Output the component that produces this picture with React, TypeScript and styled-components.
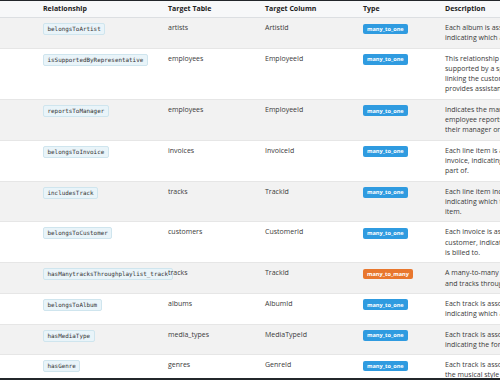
import * as React from 'react';
import styled, { createGlobalStyle } from 'styled-components';

const GlobalStyle = createGlobalStyle`
  * {
    box-sizing: border-box;
  }
  html, body {
    margin: 0;
    padding: 0;
    background: #23272b;
    overflow: hidden;
  }
`;

const StyledFrame = styled.div`
  margin-top: 1px;
  width: 500px;
  height: 377px;
  overflow: hidden;
  background: #ffffff;
  font-family: 'Open Sans', 'Segoe UI', sans-serif;
  font-size: 7px;
  color: #3a3a3a;
`;

const StyledTable = styled.table`
  border-collapse: collapse;
  table-layout: fixed;
  width: 700px;
`;

const StyledHeadCell = styled.th`
  text-align: left;
  font-weight: 700;
  color: #222222;
  line-height: 10px;
  padding: 3px 5px;
  background: #f7f8f9;
  border-bottom: 1px solid #dcdfe2;
`;

const StyledRow = styled.tr<{ $striped: boolean }>`
  background: ${(p) => (p.$striped ? '#f2f2f2' : '#ffffff')};
  border-bottom: 1px solid #e6e6e6;
`;

const StyledCell = styled.td`
  vertical-align: top;
  padding: 5px 5px 4px;
  line-height: 10.3px;
`;

const StyledCode = styled.code`
  display: inline-block;
  white-space: nowrap;
  font-family: 'DejaVu Sans Mono', 'Liberation Mono', monospace;
  font-size: 5.9px;
  line-height: 8px;
  padding: 1px 3.5px;
  color: #333333;
  background: #e9f4f9;
  border: 1px solid #cfe5ee;
  border-radius: 2px;
`;

const StyledPill = styled.span<{ $kind: string }>`
  display: inline-block;
  font-size: 5.6px;
  font-weight: 700;
  line-height: 8px;
  padding: 1.3px 4px;
  margin-top: 0.5px;
  color: #ffffff;
  border-radius: 2px;
  background: ${(p) => (p.$kind === 'many_to_many' ? '#e8772e' : '#2f9be0')};
`;

const StyledLine = styled.span`
  display: block;
  white-space: nowrap;
`;

type Relation = {
  name: string;
  table: string;
  column: string;
  type: string;
  description: string[];
};

const relations: Relation[] = [
  {
    name: 'belongsToArtist',
    table: 'artists',
    column: 'ArtistId',
    type: 'many_to_one',
    description: ['Each album is associated with a single artist,', 'indicating which artist created the album.'],
  },
  {
    name: 'isSupportedByRepresentative',
    table: 'employees',
    column: 'EmployeeId',
    type: 'many_to_one',
    description: [
      'This relationship shows that each customer is',
      'supported by a specific sales support agent,',
      'linking the customer to the employee who',
      'provides assistance.',
    ],
  },
  {
    name: 'reportsToManager',
    table: 'employees',
    column: 'EmployeeId',
    type: 'many_to_one',
    description: [
      'Indicates the management hierarchy, where each',
      'employee reports to another employee who is',
      'their manager or supervisor.',
    ],
  },
  {
    name: 'belongsToInvoice',
    table: 'invoices',
    column: 'InvoiceId',
    type: 'many_to_one',
    description: ['Each line item is associated with a specific', 'invoice, indicating which invoice it is', 'part of.'],
  },
  {
    name: 'includesTrack',
    table: 'tracks',
    column: 'TrackId',
    type: 'many_to_one',
    description: ['Each line item includes a specific track,', 'indicating which track was purchased in that', 'item.'],
  },
  {
    name: 'belongsToCustomer',
    table: 'customers',
    column: 'CustomerId',
    type: 'many_to_one',
    description: ['Each invoice is associated with a specific', 'customer, indicating which customer the invoice', 'is billed to.'],
  },
  {
    name: 'hasManytracksThroughplaylist_track',
    table: 'tracks',
    column: 'TrackId',
    type: 'many_to_many',
    description: ['A many-to-many relationship between playlists', 'and tracks through the playlist_track table.'],
  },
  {
    name: 'belongsToAlbum',
    table: 'albums',
    column: 'AlbumId',
    type: 'many_to_one',
    description: ['Each track is associated with a specific album,', 'indicating which album the track belongs to.'],
  },
  {
    name: 'hasMediaType',
    table: 'media_types',
    column: 'MediaTypeId',
    type: 'many_to_one',
    description: ['Each track is associated with a media type,', 'indicating the format of the track.'],
  },
  {
    name: 'hasGenre',
    table: 'genres',
    column: 'GenreId',
    type: 'many_to_one',
    description: ['Each track is associated with a genre, defining', 'the musical style of the track.'],
  },
];

export const App = (): React.ReactElement => (
  <>
    <GlobalStyle />
    <StyledFrame>
      <StyledTable>
        <colgroup>
          <col style={{ width: 38 }} />
          <col style={{ width: 125 }} />
          <col style={{ width: 97 }} />
          <col style={{ width: 98 }} />
          <col style={{ width: 82 }} />
          <col style={{ width: 260 }} />
        </colgroup>
        <thead>
          <tr>
            <StyledHeadCell />
            <StyledHeadCell>Relationship</StyledHeadCell>
            <StyledHeadCell>Target Table</StyledHeadCell>
            <StyledHeadCell>Target Column</StyledHeadCell>
            <StyledHeadCell>Type</StyledHeadCell>
            <StyledHeadCell>Description</StyledHeadCell>
          </tr>
        </thead>
        <tbody>
          {relations.map((r, i) => (
            <StyledRow key={r.name} $striped={i % 2 === 0}>
              <StyledCell />
              <StyledCell>
                <StyledCode>{r.name}</StyledCode>
              </StyledCell>
              <StyledCell>{r.table}</StyledCell>
              <StyledCell>{r.column}</StyledCell>
              <StyledCell>
                <StyledPill $kind={r.type}>{r.type}</StyledPill>
              </StyledCell>
              <StyledCell>
                {r.description.map((line) => (
                  <StyledLine key={line}>{line}</StyledLine>
                ))}
              </StyledCell>
            </StyledRow>
          ))}
        </tbody>
      </StyledTable>
    </StyledFrame>
  </>
);

export default App;
